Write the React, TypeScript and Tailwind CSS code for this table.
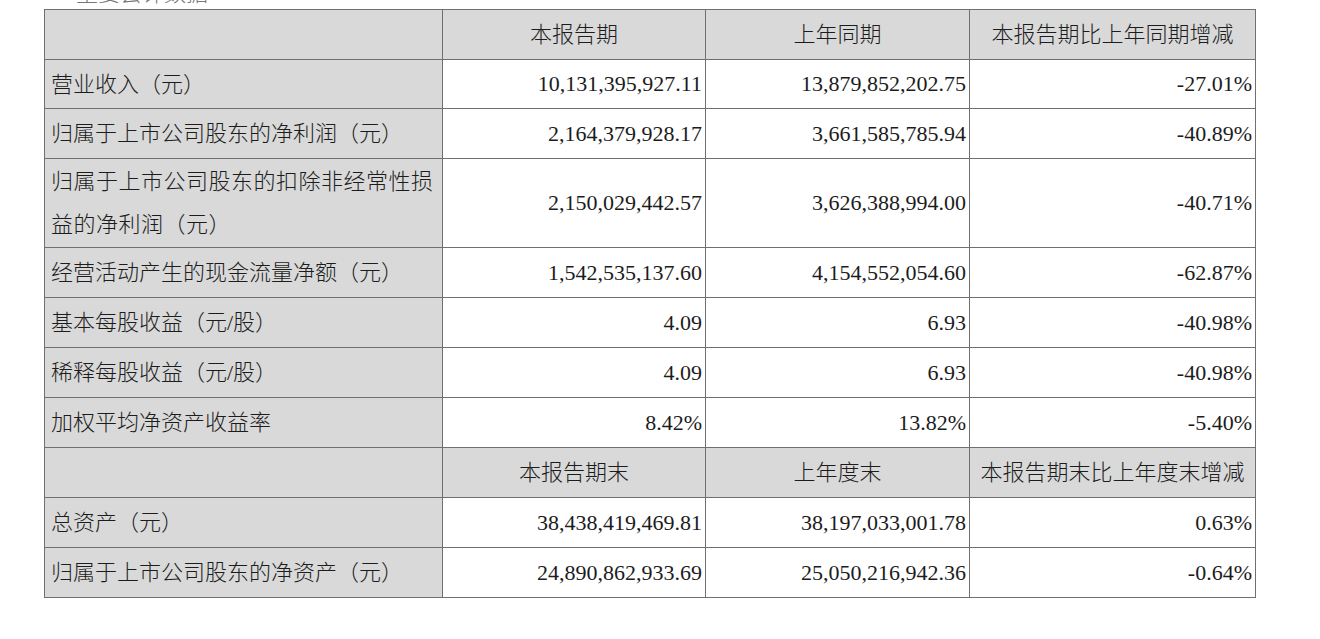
import React from "react";

type Row = { label: string; a: string; b: string; c: string; tall?: boolean; head?: boolean };

const rows: Row[] = [
  { label: "", a: "本报告期", b: "上年同期", c: "本报告期比上年同期增减", head: true },
  { label: "营业收入（元）", a: "10,131,395,927.11", b: "13,879,852,202.75", c: "-27.01%" },
  { label: "归属于上市公司股东的净利润（元）", a: "2,164,379,928.17", b: "3,661,585,785.94", c: "-40.89%" },
  { label: "归属于上市公司股东的扣除非经常性损益的净利润（元）", a: "2,150,029,442.57", b: "3,626,388,994.00", c: "-40.71%", tall: true },
  { label: "经营活动产生的现金流量净额（元）", a: "1,542,535,137.60", b: "4,154,552,054.60", c: "-62.87%" },
  { label: "基本每股收益（元/股）", a: "4.09", b: "6.93", c: "-40.98%" },
  { label: "稀释每股收益（元/股）", a: "4.09", b: "6.93", c: "-40.98%" },
  { label: "加权平均净资产收益率", a: "8.42%", b: "13.82%", c: "-5.40%" },
  { label: "", a: "本报告期末", b: "上年度末", c: "本报告期末比上年度末增减", head: true },
  { label: "总资产（元）", a: "38,438,419,469.81", b: "38,197,033,001.78", c: "0.63%" },
  { label: "归属于上市公司股东的净资产（元）", a: "24,890,862,933.69", b: "25,050,216,942.36", c: "-0.64%" },
];

export default function App() {
  return (
    <div
      className="w-[1320px] h-[639px] bg-white text-[#1c1c1c] overflow-hidden"
      style={{ fontFamily: '"Liberation Serif", "Noto Sans CJK SC", serif' }}
    >
      <div className="h-[9px] overflow-hidden pl-[76px]">
        <div className="text-[22px] leading-[22px] mt-[-17px] text-[#777] font-light">主要会计数据</div>
      </div>
      <table className="ml-[44px] border-collapse table-fixed w-[1211px] text-[22px] font-light">
        <colgroup>
          <col className="w-[398px]" />
          <col className="w-[263px]" />
          <col className="w-[264px]" />
          <col className="w-[286px]" />
        </colgroup>
        <tbody>
          {rows.map((r, i) => (
            <tr key={i} className={r.tall ? "h-[89px]" : i === 1 ? "h-[49px]" : "h-[50px]"}>
              <td className="border border-[#707070] bg-[#d9d9d9] pl-[6px] pr-[4px] align-middle">
                {r.tall ? (
                  <div className="leading-[43px] tracking-[0.5px]">{r.label}</div>
                ) : (
                  <span className="leading-[26px]">{r.label}</span>
                )}
              </td>
              {[r.a, r.b, r.c].map((v, j) => (
                <td
                  key={j}
                  className={
                    r.head
                      ? "border border-[#707070] bg-[#d9d9d9] text-center align-middle leading-[26px] px-[2px]"
                      : "border border-[#707070] bg-white text-right align-middle leading-[26px] pr-[3px]"
                  }
                >
                  {v}
                </td>
              ))}
            </tr>
          ))}
        </tbody>
      </table>
    </div>
  );
}
